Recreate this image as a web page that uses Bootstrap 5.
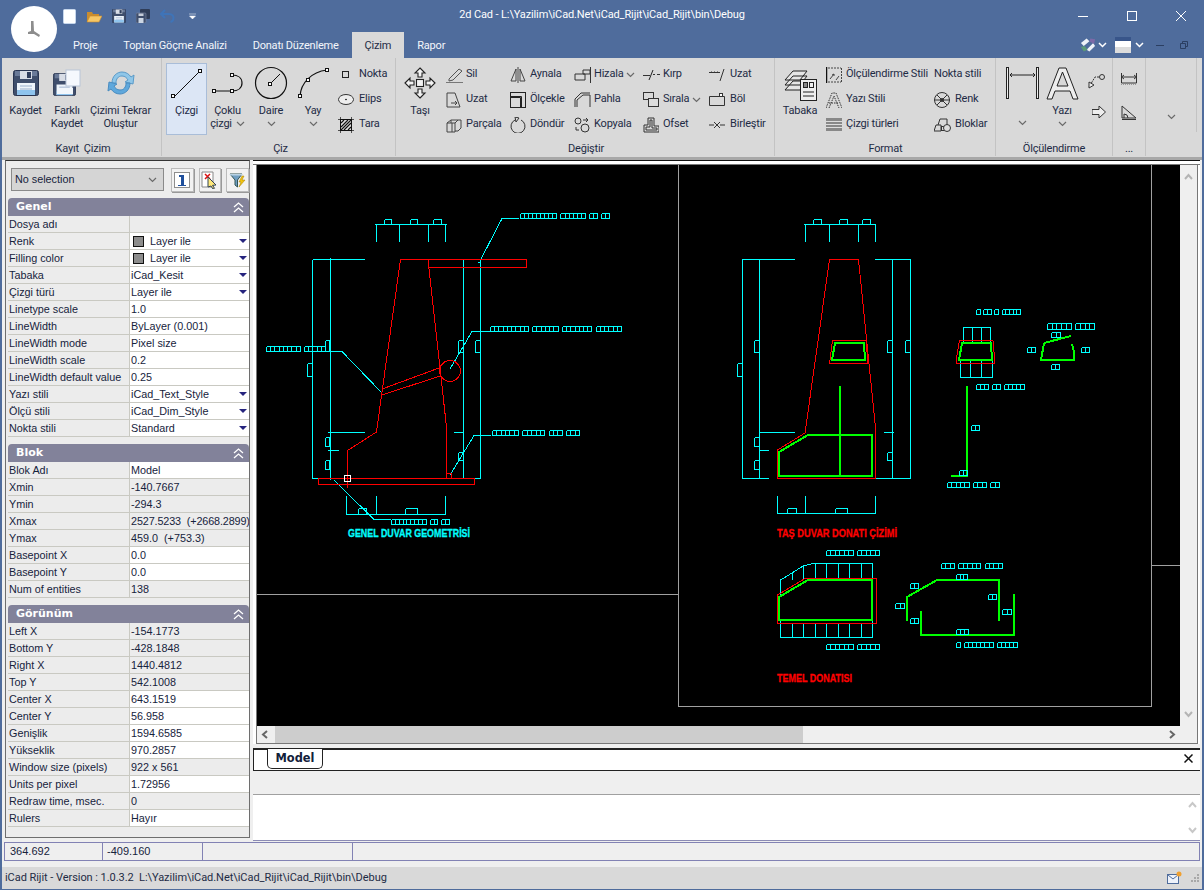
<!DOCTYPE html>
<html lang="tr">
<head>
  <meta charset="UTF-8" />
  <meta name="viewport" content="width=device-width, initial-scale=1" />
  <title>2d Cad</title>
  <link href="https://cdn.jsdelivr.net/npm/bootstrap@5.3.0/dist/css/bootstrap.min.css" rel="stylesheet" />
  <style>
    html, body { margin: 0; height: 100%; overflow: hidden; }
    body { font-family: Roboto, sans-serif; font-size: 11px; letter-spacing: -.2px; color: #1e2b45; background: #efefef; }
    svg { display: block; flex: none; }
    .app-shell { width: 1204px; height: 890px; position: relative; }

    /* title bar */
    .title-bar { height: 32px; background: #4f6c9c; color: #fff; display: grid; grid-template-columns: 1fr auto 1fr; align-items: center; }
    .title-txt { padding-bottom: 2px; letter-spacing: -.13px; }
    .qat { padding-left: 63px; gap: 10px; }
    .win-btns { gap: 39px; padding-right: 18px; }
    .logo-ball { position: absolute; left: 11px; top: 6px; width: 46px; height: 46px; border-radius: 50%; background: #fff; display: flex; align-items: center; justify-content: center; z-index: 2; }
    .tab-bar { height: 26px; background: #4f6c9c; padding-left: 60px; }
    .rtab { padding: 6px 13px 0; color: #f3f6fb; white-space: nowrap; }
    .rtab-on { background: #d9d9d9; color: #1e2b45; }
    .tab-right { padding-right: 16px; }
    .ms-12 { margin-left: 12px; }

    /* ribbon */
    .rb-strip { height: 102px; background: #d9d9d9; border-bottom: 3px solid #a8a8a8; }
    .rb-group { height: 98px; border-right: 1px solid #c3c3c3; flex: none; }
    .rb-body { height: 84px; padding-top: 4px; }
    .rb-cap { text-align: center; line-height: 14px; }
    .gw1 { width: 162px; padding-left: 5px; }
    .gw2 { width: 234px; padding-left: 4px; }
    .gw3 { width: 379px; padding-left: 2px; }
    .gw4 { width: 221px; padding-left: 1px; }
    .gw5 { width: 117px; }
    .gw6 { width: 33px; }
    .gw7 { width: 51px; border-right: 0; }
    .bigbtn { display: flex; flex-direction: column; align-items: center; text-align: center; line-height: 13px; flex: none; height: 72px; }
    .big-ic { height: 42px; width: 100%; display: flex; align-items: center; justify-content: center; }
    .big-sel { background: #dce6f5; border: 1px solid #a9bdd8; margin-top: 1px; }
    .big-sel .big-ic { height: 40px; }
    .bw41 { width: 41px; } .bw42 { width: 42px; } .bw65 { width: 65px; } .bw44 { width: 44px; } .bw48 { width: 48px; }
    .smcol { flex: none; }
    .smrow { height: 25px; display: flex; align-items: center; white-space: nowrap; }
    .sm-ic { width: 20px; flex: none; }
    .sm-ic21 { width: 21px; flex: none; }
    .cw64 { width: 64px; } .cw69 { width: 69px; } .cw66 { width: 66px; } .cw60 { width: 60px; } .cw108 { width: 108px; } .cw62 { width: 62px; }
    .ms-4px { margin-left: 4px; } .ms-2px { margin-left: 2px; }
    .dimcol { width: 42px; margin-left: 5px; } .yazicol { width: 38px; }
    .chev-slot { height: 13px; display: flex; align-items: center; justify-content: center; }
    .chev-low { margin-top: 12px; }
    .mini-col { gap: 17px; padding: 11px 0 0 7px; width: 30px; }
    .tiny-col { gap: 20px; padding: 11px 0 0 8px; }
    .end-col { width: 100%; padding-top: 56px; border-right: 1px solid #c3c3c3; height: 74px; }

    /* property panel */
    .work-row { height: 681px; }
    .prop-side { width: 245px; margin-left: 5px; background: #ececec; border: 1px solid #6e6e6e; border-top: 1px solid #333; height: 678px; flex: none; font-family: "Liberation Sans", sans-serif; font-size: 10.8px; letter-spacing: 0; color: #16233c; padding: 7px 0 0 2px; }
    .prop-tools { height: 30px; padding-left: 3px; gap: 5px; }
    .sel-box { width: 155px; height: 23px; background: #d5d5d5; border: 1px solid #8a8a8a; padding: 0 6px 0 3px; margin-right: 2px; }
    .tool-btn { width: 23px; height: 24px; background: #f2f2f2; border: 1px solid #bbb; box-shadow: 1px 1px 0 #999; display: flex; align-items: center; justify-content: center; }
    .pg-head { height: 18px; background: #82829a; color: #fff; font-family: "DejaVu Sans", sans-serif; font-weight: 700; font-size: 11px; padding: 0 5px 0 8px; border-radius: 4px 4px 0 0; }
    .pg-row { height: 17px; border-bottom: 1px solid #c9c9c2; line-height: 16px; white-space: nowrap; }
    .pg-k { width: 122px; padding-left: 1px; border-right: 1px solid #c9c9c2; flex: none; overflow: hidden; }
    .pg-v { flex: 1 1 auto; padding-left: 1px; overflow: hidden; min-width: 0; display: flex; align-items: center; justify-content: space-between; }
    .pg-fit { letter-spacing: -.12px; }
    .pg-w { background: #fff; }
    .pg-gap { height: 7px; }
    .tri-dn { width: 0; height: 0; border: 4px solid transparent; border-top: 4px solid #26247e; border-bottom: 0; margin-right: 2px; flex: none; }
    .swatch { display: inline-block; width: 11px; height: 11px; background: #8c8c8c; border: 1px solid #111; margin: 0 6px 0 2px; vertical-align: -2px; }

    /* right side */
    .right-side { width: 947px; margin-left: 3px; flex: none; }
    .top-strip { height: 5px; background: #fff; border-top: 1px solid #111; border-bottom: 1px solid #777; }
    .view-frame { background: #fff; padding-left: 3px; }
    .view-inner { border-left: 1px solid #777; border-right: 1px solid #777; border-bottom: 1px solid #777; width: 942px; background: #efefef; }
    .cad-view { background: #000; }
    .vbar { width: 17px; background: #efefef; height: 561px; padding: 8px 0; }
    .hbar { height: 17px; width: 923px; background: #efefef; padding: 0 4px; }
    .h-thumb { position: absolute; left: 7px; width: 528px; top: 0; height: 17px; background: #cdcdcd; }
    .hbar-track { position: relative; flex: 1 1 auto; height: 17px; }
    .tab-gap { height: 4px; background: #efefef; }
    .model-strip { height: 23px; background: #fff; border-top: 2px solid #222; border-bottom: 1px solid #222; border-left: 1px solid #222; padding-left: 13px; padding-right: 7px; }
    .model-tab { width: 56px; height: 20px; background: #fff; border: 1px solid #222; border-top: 0; border-radius: 0 0 5px 5px; font-family: "DejaVu Sans", sans-serif; font-weight: 700; font-size: 11.4px; letter-spacing: 0; text-align: center; line-height: 18px; margin-top: -1px; color: #12203a; }
    .out-gap { height: 24px; background: #efefef; border-bottom: 1px solid #a0a0a0; }
    .out-box { height: 46px; background: #fff; padding: 6px 0; border-bottom: 1px solid #8c8cb4; }
    .out-bar { width: 16px; }

    /* status */
    .coord-row { height: 19px; margin: 1px 4px 0 4px; border: 1px solid #8282b4; background: #efefef; font-family: "Liberation Sans", sans-serif; font-size: 11px; letter-spacing: 0; color: #16233c; line-height: 17px; }
    .cc1 { width: 98px; padding-left: 5px; border-right: 1px solid #8282b4; }
    .cc2 { width: 100px; padding-left: 4px; border-right: 1px solid #8282b4; }
    .cc3 { width: 150px; border-right: 1px solid #8282b4; }
    .foot-bar { position: absolute; left: 0; right: 0; bottom: 0; height: 25px; background: #d9d9d9; border-top: 2px solid #efefef; border-bottom: 1px solid #4f6c9c; padding: 0 4px 0 5px; letter-spacing: -.05px; }
    .side-l { position: absolute; top: 58px; bottom: 0; left: 0; width: 2px; background: #4f6c9c; z-index: 3; }
    .side-r { position: absolute; top: 58px; bottom: 0; right: 0; width: 2px; background: #4f6c9c; z-index: 3; }
  </style>
</head>
<body>
<svg width="0" height="0" class="position-absolute">
  <symbol id="chev" viewBox="0 0 9 6"><path d="M1 1l3.5 3.5L8 1" fill="none" stroke="#6a6a6a" stroke-width="1.2"/></symbol>
  <symbol id="chevw" viewBox="0 0 9 6"><path d="M1 1l3.5 3.5L8 1" fill="none" stroke="#fff" stroke-width="1.5"/></symbol>
  <symbol id="floppy" viewBox="0 0 26 26">
    <rect x=".5" y=".5" width="25" height="25" rx="2" fill="#3f4e6c" stroke="#2a3652"/>
    <rect x="2" y="1" width="22" height="5" fill="#6a7a98"/>
    <rect x="7" y="1" width="12" height="8" fill="#d8dde6"/><rect x="14" y="2" width="4" height="6" fill="#2f3d5c"/>
    <rect x="4" y="13" width="18" height="12" fill="#eef4fb"/><rect x="4" y="20" width="18" height="5" fill="#8fc4ee"/>
    <path d="M7 16h12M7 19h12" stroke="#9ab0cc"/>
  </symbol>
</svg>

<div class="app-shell">
  <div class="side-l"></div><div class="side-r"></div>

  <div class="logo-ball">
    <svg width="14" height="17" viewBox="0 0 14 17"><path d="M4 0h2.500l.5 10 6 4-1 2-5-3H1v-2l3-1z" fill="#8d8d8d"/></svg>
  </div>

  <div class="title-bar">
    <div class="qat d-flex align-items-center">
      <svg width="13" height="15"><rect x=".5" y=".5" width="12" height="14" rx="1" fill="#fff" stroke="#c6d6ec"/></svg>
      <svg width="16" height="13" viewBox="0 0 16 13"><path d="M1 12V2h5l1 2h6v8z" fill="#c98c2e"/><path d="M1 12l3-6h12l-3 6z" fill="#f6c766" stroke="#c98c2e" stroke-width=".6"/></svg>
      <svg width="14" height="14"><use href="#floppy"/></svg>
      <svg width="14" height="14" viewBox="0 0 14 14"><rect x="4" y="0" width="10" height="10" rx="1" fill="#2f3d58"/><rect x="0" y="4" width="10" height="10" rx="1" fill="#3f4e6c" stroke="#7c8aa5" stroke-width=".6"/><rect x="2.500" y="9" width="5" height="5" fill="#ccd6e3"/><rect x="2.500" y="4.500" width="5" height="2.500" fill="#c5ccd8"/></svg>
      <svg width="15" height="14" viewBox="0 0 15 14"><path d="M5 1L1 5l4 4M1.500 5H9c3 0 4.500 2 4.500 4s-1 3.500-3 4" fill="none" stroke="#3f74b8" stroke-width="2"/></svg>
      <svg width="8" height="6" viewBox="0 0 8 6" class="ms-1"><path d="M0 1h7M.5 3h6L3.500 6z" fill="#fff" stroke="#fff" stroke-width=".5"/></svg>
    </div>
    <div class="title-txt">2d Cad - L:\Yazilim\iCad.Net\iCad_Rijit\iCad_Rijit\bin\Debug</div>
    <div class="win-btns d-flex justify-content-end align-items-center">
      <svg width="10" height="10"><path d="M0 5.500h10" stroke="#fff"/></svg>
      <svg width="10" height="10"><rect x=".5" y=".5" width="9" height="9" fill="none" stroke="#fff"/></svg>
      <svg width="10" height="10"><path d="M0 0l10 10M10 0L0 10" stroke="#fff"/></svg>
    </div>
  </div>

  <div class="tab-bar d-flex justify-content-between">
    <div class="d-flex">
      <div class="rtab">Proje</div>
      <div class="rtab">Toptan Göçme Analizi</div>
      <div class="rtab">Donatı Düzenleme</div>
      <div class="rtab rtab-on">Çizim</div>
      <div class="rtab">Rapor</div>
    </div>
    <div class="tab-right d-flex align-items-center">
      <svg width="16" height="16" viewBox="0 0 17 16"><path d="M1 6l6-5 3 3-6 5zM7 13l7-7 2 3-6 6z" fill="#eef2f8"/><path d="M11 1l5 1-1 5-5-3z" fill="#7c6aa8"/><path d="M1 10l4-1 3 4-4 2z" fill="#5b9a78"/></svg>
      <svg width="9" height="6" class="ms-2px"><use href="#chevw"/></svg>
      <svg width="16" height="16" viewBox="0 0 16 16" class="ms-2"><rect width="16" height="4" fill="#38558a"/><rect y="4" width="16" height="6" fill="#fff"/><rect y="10" width="16" height="6" fill="#dcdcdc"/></svg>
      <svg width="9" height="6" class="ms-1"><use href="#chevw"/></svg>
      <svg width="8" height="8" class="ms-12"><path d="M0 4.500h8" stroke="#2b3f62"/></svg>
      <svg width="8" height="8" class="ms-3"><path d="M2.500 2.500V.5h5v5h-2M.5 2.500h5v5h-5z" fill="none" stroke="#2b3f62"/></svg>
    </div>
  </div>

  <div class="rb-strip d-flex">
    <!-- Kayıt Çizim -->
    <div class="rb-group gw1">
      <div class="rb-body d-flex">
        <div class="bigbtn bw41"><div class="big-ic"><svg width="26" height="26"><use href="#floppy"/></svg></div>Kaydet</div>
        <div class="bigbtn bw42"><div class="big-ic"><svg width="28" height="28" viewBox="0 0 28 28"><use href="#floppy" width="23" height="23" y="4"/><rect x="13" y="1" width="14" height="16" fill="#f5f8fd" stroke="#b9c6d8"/><rect x="4" y="19" width="16" height="6" fill="#f2f7fc"/></svg></div>Farklı<br>Kaydet</div>
        <div class="bigbtn bw65"><div class="big-ic"><svg width="32" height="28" viewBox="0 0 32 28"><path d="M7 14C7 7 12 3 17 3c4 0 7 2 9 5l3-2-1 9-8-2 3-2c-1-2-3-4-6-4-4 0-6 3-6 7z" fill="#8fc6e8" stroke="#5a9ac8"/><path d="M25 14c0 7-5 11-10 11-4 0-7-2-9-5l-3 2 1-9 8 2-3 2c1 2 3 4 6 4 4 0 6-3 6-7z" fill="#5fa8dc" stroke="#4a8cc0"/></svg></div><span class="text-nowrap">Çizimi Tekrar</span>Oluştur</div>
      </div>
      <div class="rb-cap">Kayıt&nbsp; Çizim</div>
    </div>

    <!-- Çiz -->
    <div class="rb-group gw2">
      <div class="rb-body d-flex">
        <div class="bigbtn bw41 big-sel"><div class="big-ic"><svg width="33" height="33" viewBox="0 0 33 33" fill="#fff" stroke="#111"><path d="M4 29L29 4"/><rect x="1.500" y="26.500" width="3" height="3"/><rect x="28.500" y="1.500" width="3" height="3"/></svg></div>Çizgi</div>
        <div class="bigbtn bw41"><div class="big-ic"><svg width="33" height="22" viewBox="0 0 33 22" fill="none" stroke="#111"><path d="M3 19h18M21 3c6 0 10 3 10 8s-4 8-10 8" stroke-width="1.200"/><rect x="1.500" y="17.500" width="3" height="3" fill="#fff"/><rect x="19.500" y="17.500" width="3" height="3" fill="#fff"/><rect x="19.500" y="1.500" width="3" height="3" fill="#fff"/></svg></div>Çoklu<span class="d-flex align-items-center gap-1">çizgi <svg width="9" height="6"><use href="#chev"/></svg></span></div>
        <div class="bigbtn bw42 ms-2px"><div class="big-ic"><svg width="34" height="34" viewBox="0 0 34 34" fill="#fff" stroke="#111"><circle cx="17" cy="17" r="15.500" fill="none" stroke-width="1.200"/><path d="M16 18L26 8"/><rect x="14.500" y="16.500" width="3" height="3"/></svg></div>Daire<div class="chev-slot"><svg width="9" height="6"><use href="#chev"/></svg></div></div>
        <div class="bigbtn bw42"><div class="big-ic"><svg width="33" height="32" viewBox="0 0 33 32" fill="#fff" stroke="#111"><path d="M3 29C4 16 14 5 30 3" fill="none" stroke-width="1.200"/><rect x="1.500" y="27.500" width="3" height="3"/><rect x="9.500" y="11.500" width="3" height="3"/><rect x="28.500" y="1.500" width="3" height="3"/></svg></div>Yay<div class="chev-slot"><svg width="9" height="6"><use href="#chev"/></svg></div></div>
        <div class="smcol ms-4px">
          <div class="smrow"><div class="sm-ic21"><svg width="16" height="9" viewBox="0 0 16 9"><rect x="4.500" y="1.500" width="6" height="6" fill="none" stroke="#222"/></svg></div>Nokta</div>
          <div class="smrow"><div class="sm-ic21"><svg width="16" height="11" viewBox="0 0 16 11"><ellipse cx="8" cy="5.500" rx="7.500" ry="5" fill="#eee" stroke="#333"/><circle cx="8" cy="5.500" r=".8"/></svg></div>Elips</div>
          <div class="smrow"><div class="sm-ic21"><svg width="16" height="16" viewBox="0 0 16 16" fill="none" stroke="#111"><rect x="2.500" y="2.500" width="11" height="11" fill="#ddd"/><path d="M3 6l3-3M3 10l7-7M3 13l10-10M6 13l7-7M10 13l3-3" stroke-width="1.100"/><path d="M0 2.500h16M0 13.500h16M2.500 0v16M13.500 0v16" stroke-width=".7"/></svg></div>Tara</div>
        </div>
      </div>
      <div class="rb-cap">Çiz</div>
    </div>

    <!-- Değiştir -->
    <div class="rb-group gw3">
      <div class="rb-body d-flex">
        <div class="bigbtn bw44"><div class="big-ic"><svg width="32" height="32" viewBox="0 0 32 32" fill="#f3f3f3" stroke="#222" stroke-width="1.100"><rect x="12.500" y="12.500" width="7" height="7"/><path d="M16 1l5 5h-3v4h-4V6h-3zM16 31l5-5h-3v-4h-4v4h-3zM1 16l5-5v3h4v4H6v3zM31 16l-5-5v3h-4v4h4v3z"/></svg></div>Taşı</div>
        <div class="smcol cw64 ms-4px">
          <div class="smrow"><div class="sm-ic"><svg width="17" height="16" viewBox="0 0 17 16" fill="none" stroke="#555"><path d="M3 12L13 2l3 2L7 13l-4 1z"/><path d="M0 15.500h17" stroke="#777"/></svg></div>Sil</div>
          <div class="smrow"><div class="sm-ic"><svg width="17" height="16" viewBox="0 0 17 16" fill="none" stroke="#444"><path d="M1 1h8l5 14H1zM5 11h6M9 9l2 2-2 2"/></svg></div>Uzat</div>
          <div class="smrow"><div class="sm-ic"><svg width="17" height="16" viewBox="0 0 17 16" fill="none" stroke="#444"><path d="M1 6h8v9H1zM9 6l3-3M5 3h10v8l-3 3H9M5 3l-4 3M5 3v3"/><path d="M6 6v9" /></svg></div>Parçala</div>
        </div>
        <div class="smcol cw64">
          <div class="smrow"><div class="sm-ic"><svg width="16" height="16" viewBox="0 0 16 16" fill="none" stroke="#444"><path d="M8 0v16M6 2L1 14h5zM10 2l5 12h-5z"/></svg></div>Aynala</div>
          <div class="smrow"><div class="sm-ic"><svg width="16" height="16" viewBox="0 0 16 16" fill="none" stroke="#222"><rect x=".5" y=".5" width="15" height="15"/><path d="M.5 5.500h10v10M.5 4.500h11v11"/></svg></div>Ölçekle</div>
          <div class="smrow"><div class="sm-ic"><svg width="16" height="16" viewBox="0 0 16 16" fill="none" stroke="#333"><path d="M5 3a7 7 0 1 0 6 0M5 0l1 5 3-4z"/></svg></div>Döndür</div>
        </div>
        <div class="smcol cw69">
          <div class="smrow"><div class="sm-ic"><svg width="17" height="16" viewBox="0 0 17 16" fill="none" stroke="#333"><path d="M16.500 0v16M1 7h10v6H1zM9 3h7v4H9z"/></svg></div>Hizala&nbsp;<svg width="9" height="6"><use href="#chev"/></svg></div>
          <div class="smrow"><div class="sm-ic"><svg width="17" height="16" viewBox="0 0 17 16" fill="none" stroke="#333"><path d="M1 15V7l6-6h9M3 15V8l6-5h7v12"/></svg></div>Pahla</div>
          <div class="smrow"><div class="sm-ic"><svg width="17" height="16" viewBox="0 0 17 16" fill="none" stroke="#333"><circle cx="4" cy="4" r="3"/><circle cx="11" cy="11" r="4"/><path d="M9 3h5l-2-2M14 3l-2 2M2 10v3h3"/></svg></div>Kopyala</div>
        </div>
        <div class="smcol cw66">
          <div class="smrow"><div class="sm-ic"><svg width="17" height="10" viewBox="0 0 17 10" fill="none" stroke="#333"><path d="M0 5.500h7M10 4.500h2M14 4.500h3"/><path d="M6 10l4-10" stroke="#222"/></svg></div>Kırp</div>
          <div class="smrow"><div class="sm-ic"><svg width="16" height="15" viewBox="0 0 16 15" fill="none" stroke="#333"><rect x=".5" y=".5" width="10" height="7"/><rect x="5.500" y="6.500" width="10" height="8" fill="#ddd"/></svg></div>Sırala&nbsp;<svg width="9" height="6"><use href="#chev"/></svg></div>
          <div class="smrow"><div class="sm-ic"><svg width="16" height="16" viewBox="0 0 16 16" fill="none" stroke="#333"><path d="M1 15V8h4V1h6v8h5v6zM3 13V10h4V3h2v8h5v2z"/></svg></div>Ofset</div>
        </div>
        <div class="smcol cw60">
          <div class="smrow"><div class="sm-ic21"><svg width="16" height="12" viewBox="0 0 16 12" fill="none" stroke="#333"><path d="M0 3.500h11M11 12L15 0" /><path d="M2 2.500h1M5 2.500h1M8 2.500h1" stroke="#888"/></svg></div>Uzat</div>
          <div class="smrow"><div class="sm-ic21"><svg width="16" height="13" viewBox="0 0 16 13" fill="none" stroke="#333"><path d="M.5 3.500h10M14 3.500h1.500v9H.5v-9"/><rect x="10.500" y=".5" width="3" height="3" fill="#fff"/></svg></div>Böl</div>
          <div class="smrow"><div class="sm-ic21"><svg width="16" height="8" viewBox="0 0 16 8" fill="none" stroke="#333"><path d="M0 4h5M11 4h5M5 1l6 6M11 1L5 7"/></svg></div>Birleştir</div>
        </div>
      </div>
      <div class="rb-cap">Değiştir</div>
    </div>

    <!-- Format -->
    <div class="rb-group gw4">
      <div class="rb-body d-flex">
        <div class="bigbtn bw48"><div class="big-ic"><svg width="33" height="35" viewBox="0 0 33 35" fill="#e6e6e6" stroke="#222"><path d="M1 14L9 5h14l-7 9zM1 19l8-9h14l-7 9zM1 24l8-9h14l-7 9z"/><rect x="16.500" y="13.500" width="16" height="21" fill="#eee"/><rect x="19.500" y="16.500" width="4" height="5" fill="#888"/><rect x="25.500" y="16.500" width="4" height="5" fill="none"/><path d="M19 26h11M19 30h11" /></svg></div>Tabaka</div>
        <div class="smcol cw108 ms-2px">
          <div class="smrow"><div class="sm-ic"><svg width="16" height="16" viewBox="0 0 16 16" fill="none" stroke="#444"><path d="M.5 0v16" stroke="#111" stroke-width="1.500"/><path d="M15.500 1v14M2 1h13M2 15h13" stroke-dasharray="2 1"/><path d="M4 12l4-5M10 13l3-4M6 8l2-1v2" /></svg></div>Ölçülendirme Stili</div>
          <div class="smrow"><div class="sm-ic"><svg width="16" height="16" viewBox="0 0 16 16" fill="none" stroke="#333" stroke-dasharray="1.500 1"><path d="M0 16L6 1h4l6 15M3 11h10M3 16L8 4l5 12"/></svg></div>Yazı Stili</div>
          <div class="smrow"><div class="sm-ic"><svg width="16" height="13" viewBox="0 0 16 13"><rect width="16" height="13" fill="#888"/><path d="M0 3.500h16M0 6.500h16M0 9.500h16" stroke="#ddd"/></svg></div>Çizgi türleri</div>
        </div>
        <div class="smcol cw62">
          <div class="smrow">Nokta stili</div>
          <div class="smrow"><div class="sm-ic21"><svg width="16" height="16" viewBox="0 0 16 16" fill="none" stroke="#333"><circle cx="8" cy="8" r="7.500"/><circle cx="8" cy="8" r="1.500"/><path d="M3 3l10 10M13 3L3 13M0 8h16"/></svg></div>Renk</div>
          <div class="smrow"><div class="sm-ic21"><svg width="17" height="15" viewBox="0 0 17 15" fill="none" stroke="#333"><path d="M0 14l2-6h5v6zM4 8l2-6h7v6"/><rect x="7.500" y="9.500" width="4" height="4" /><circle cx="13" cy="11" r="3.500" fill="#ddd"/></svg></div>Bloklar</div>
        </div>
      </div>
      <div class="rb-cap">Format</div>
    </div>

    <!-- Ölçülendirme -->
    <div class="rb-group gw5">
      <div class="rb-body d-flex">
        <div class="bigbtn dimcol"><div class="big-ic"><svg width="33" height="32" viewBox="0 0 33 32" fill="#eee" stroke="#222"><rect x=".5" y=".5" width="2" height="31"/><rect x="30.500" y=".5" width="2" height="31"/><path d="M4 8h25M6 6L4 8l2 2M27 6l2 2-2 2" fill="none"/></svg></div><div class="chev-slot chev-low"><svg width="9" height="6"><use href="#chev"/></svg></div></div>
        <div class="bigbtn yazicol"><div class="big-ic"><svg width="33" height="33" viewBox="0 0 33 33" fill="#eee" stroke="#222"><path d="M1 32L13 1h7l12 31h-5l-3-8H9l-3 8zM11 19h11L16.500 5z"/></svg></div>Yazı<div class="chev-slot"><svg width="9" height="6"><use href="#chev"/></svg></div></div>
        <div class="smcol mini-col d-flex flex-column">
          <svg width="18" height="16" viewBox="0 0 18 16" fill="none" stroke="#333"><circle cx="14" cy="4" r="2.500"/><path d="M11 4H7L1 14" stroke-dasharray="2 1"/><path d="M1 15V9l5 3z" fill="#eee"/></svg>
          <svg width="14" height="12" viewBox="0 0 14 12" class="ms-1" fill="#eee" stroke="#333"><path d="M0 3.500h7V0l6.500 6L7 12V8.500H0z"/></svg>
        </div>
      </div>
      <div class="rb-cap">Ölçülendirme</div>
    </div>

    <div class="rb-group gw6">
      <div class="rb-body"><div class="tiny-col d-flex flex-column">
        <svg width="16" height="12" viewBox="0 0 16 12" fill="none" stroke="#333"><path d="M.5 0v10h15V0M.5 4h15M3 2L.5 4 3 6M13 2l2.500 2L13 6"/><path d="M0 11.500h16" stroke="#999" stroke-dasharray="1 1"/></svg>
        <svg width="16" height="16" viewBox="0 0 16 16" fill="none" stroke="#333"><path d="M1 1v12h14zM1 14.500h14M3 13v-4a4 4 0 0 1 4 4"/></svg>
      </div></div>
      <div class="rb-cap">...</div>
    </div>

    <div class="rb-group gw7">
      <div class="end-col d-flex justify-content-center"><svg width="9" height="6"><use href="#chev"/></svg></div>
    </div>
  </div>

  <div class="work-row d-flex">
    <div class="prop-side">
      <div class="prop-tools d-flex">
        <div class="sel-box d-flex align-items-center justify-content-between">No selection <svg width="9" height="6"><use href="#chev"/></svg></div>
        <div class="tool-btn"><svg width="16" height="16" viewBox="0 0 16 16"><rect x=".5" y=".5" width="15" height="15" fill="#fff" stroke="#222" stroke-dasharray="1 1"/><path d="M5 3h5v10h2v1H4v-1h3V5H5z" fill="#1f4f9c"/></svg></div>
        <div class="tool-btn"><svg width="17" height="18" viewBox="0 0 17 18"><path d="M1 1h11v15H1z" fill="#fff" stroke="#888"/><path d="M4 3l5 5M9 3L4 8" stroke="#d11" stroke-width="1.500"/><path d="M7 6l8 8-3.500.3 2 3-1.500.7-2-3L7 16z" fill="#ffe87a" stroke="#345"/></svg></div>
        <div class="tool-btn"><svg width="17" height="17" viewBox="0 0 17 17"><path d="M1 2h12L8.500 8v7L6 13V8z" fill="#6f9ec2" stroke="#355"/><path d="M1 2h12v1.500H1z" fill="#b8d2e4"/><path d="M13 4l-3 6h2l-2 5 6-7h-3l2-4z" fill="#f1c40f" stroke="#a67c00" stroke-width=".5"/></svg></div>
      </div>

      <div class="pg-head d-flex align-items-center justify-content-between">Genel <svg width="11" height="11" viewBox="0 0 11 11" fill="none" stroke="#fff" stroke-width="1.300"><path d="M1 5l4.500-4L10 5M1 10l4.500-4L10 10"/></svg></div>
      <div class="pg-row d-flex"><div class="pg-k">Dosya adı</div><div class="pg-v"></div></div>
      <div class="pg-row d-flex"><div class="pg-k">Renk</div><div class="pg-v pg-w"><span><i class="swatch"></i>Layer ile</span><i class="tri-dn"></i></div></div>
      <div class="pg-row d-flex"><div class="pg-k">Filling color</div><div class="pg-v pg-w"><span><i class="swatch"></i>Layer ile</span><i class="tri-dn"></i></div></div>
      <div class="pg-row d-flex"><div class="pg-k">Tabaka</div><div class="pg-v pg-w"><span>iCad_Kesit</span><i class="tri-dn"></i></div></div>
      <div class="pg-row d-flex"><div class="pg-k">Çizgi türü</div><div class="pg-v pg-w"><span>Layer ile</span><i class="tri-dn"></i></div></div>
      <div class="pg-row d-flex"><div class="pg-k">Linetype scale</div><div class="pg-v pg-w">1.0</div></div>
      <div class="pg-row d-flex"><div class="pg-k">LineWidth</div><div class="pg-v pg-w">ByLayer (0.001)</div></div>
      <div class="pg-row d-flex"><div class="pg-k">LineWidth mode</div><div class="pg-v pg-w">Pixel size</div></div>
      <div class="pg-row d-flex"><div class="pg-k">LineWidth scale</div><div class="pg-v pg-w">0.2</div></div>
      <div class="pg-row d-flex"><div class="pg-k">LineWidth default value</div><div class="pg-v pg-w">0.25</div></div>
      <div class="pg-row d-flex"><div class="pg-k">Yazı stili</div><div class="pg-v pg-w"><span>iCad_Text_Style</span><i class="tri-dn"></i></div></div>
      <div class="pg-row d-flex"><div class="pg-k">Ölçü stili</div><div class="pg-v pg-w"><span>iCad_Dim_Style</span><i class="tri-dn"></i></div></div>
      <div class="pg-row d-flex"><div class="pg-k">Nokta stili</div><div class="pg-v pg-w"><span>Standard</span><i class="tri-dn"></i></div></div>
      <div class="pg-gap"></div>

      <div class="pg-head d-flex align-items-center justify-content-between">Blok <svg width="11" height="11" viewBox="0 0 11 11" fill="none" stroke="#fff" stroke-width="1.300"><path d="M1 5l4.500-4L10 5M1 10l4.500-4L10 10"/></svg></div>
      <div class="pg-row d-flex"><div class="pg-k">Blok Adı</div><div class="pg-v pg-w">Model</div></div>
      <div class="pg-row d-flex"><div class="pg-k">Xmin</div><div class="pg-v">-140.7667</div></div>
      <div class="pg-row d-flex"><div class="pg-k">Ymin</div><div class="pg-v">-294.3</div></div>
      <div class="pg-row d-flex"><div class="pg-k">Xmax</div><div class="pg-v pg-fit">2527.5233&nbsp; (+2668.2899)</div></div>
      <div class="pg-row d-flex"><div class="pg-k">Ymax</div><div class="pg-v">459.0&nbsp; (+753.3)</div></div>
      <div class="pg-row d-flex"><div class="pg-k">Basepoint X</div><div class="pg-v pg-w">0.0</div></div>
      <div class="pg-row d-flex"><div class="pg-k">Basepoint Y</div><div class="pg-v pg-w">0.0</div></div>
      <div class="pg-row d-flex"><div class="pg-k">Num of entities</div><div class="pg-v">138</div></div>
      <div class="pg-gap"></div>

      <div class="pg-head d-flex align-items-center justify-content-between">Görünüm <svg width="11" height="11" viewBox="0 0 11 11" fill="none" stroke="#fff" stroke-width="1.300"><path d="M1 5l4.500-4L10 5M1 10l4.500-4L10 10"/></svg></div>
      <div class="pg-row d-flex"><div class="pg-k">Left X</div><div class="pg-v">-154.1773</div></div>
      <div class="pg-row d-flex"><div class="pg-k">Bottom Y</div><div class="pg-v">-428.1848</div></div>
      <div class="pg-row d-flex"><div class="pg-k">Right X</div><div class="pg-v">1440.4812</div></div>
      <div class="pg-row d-flex"><div class="pg-k">Top Y</div><div class="pg-v">542.1008</div></div>
      <div class="pg-row d-flex"><div class="pg-k">Center X</div><div class="pg-v pg-w">643.1519</div></div>
      <div class="pg-row d-flex"><div class="pg-k">Center Y</div><div class="pg-v pg-w">56.958</div></div>
      <div class="pg-row d-flex"><div class="pg-k">Genişlik</div><div class="pg-v pg-w">1594.6585</div></div>
      <div class="pg-row d-flex"><div class="pg-k">Yükseklik</div><div class="pg-v pg-w">970.2857</div></div>
      <div class="pg-row d-flex"><div class="pg-k">Window size (pixels)</div><div class="pg-v">922 x 561</div></div>
      <div class="pg-row d-flex"><div class="pg-k">Units per pixel</div><div class="pg-v pg-w">1.72956</div></div>
      <div class="pg-row d-flex"><div class="pg-k">Redraw time, msec.</div><div class="pg-v">0</div></div>
      <div class="pg-row d-flex"><div class="pg-k">Rulers</div><div class="pg-v pg-w">Hayır</div></div>
    </div>

    <div class="right-side">
      <div class="top-strip"></div>
      <div class="view-frame">
        <div class="view-inner">
          <div class="d-flex">
            <svg id="cadView" class="cad-view" width="923" height="561" viewBox="257 165 923 561" shape-rendering="crispEdges" fill="none">
              <g stroke="#a0a0a0">
                <path d="M678.500 165V706.500H1151.500V165M257 594.500H678M1152 565.500H1180"/>
              </g>
              <g stroke="#00ffff">
                <!-- genel duvar -->
                <path d="M375 224.500H447M376.500 224V242M399.500 224V242M428.500 224V242M445.500 224V242"/>
                <path d="M312.500 259.500V478.500H318M312.500 259.500H365M330.500 258V480M463.500 259V478M480.500 259V478.500H475"/>
                <path d="M328 432.500H365M454 432.500H463M328 450.500H339"/>
                <path d="M519 218.500H502L481 259M478 262.500H481M490 331.500H472L450 369M491 435.500H474L450 475"/>
                <path d="M312 351.500H342L381 392M334 480L374 519.500H391"/>
                <path d="M346.500 496V514M376.500 496V514M445.500 496V514M346 514.500H446"/>
                <!-- tas duvar -->
                <path d="M804 224.500H876M805.500 224V242M829.500 224V242M858.500 224V242M875.500 224V242"/>
                <path d="M742.500 259V478.500H769M742 259.500H795M759.500 259V478M875 259.500H910.500V478.500H875M892.500 259V478"/>
                <path d="M759 432.500H795M884 432.500H894M759 450.500H769"/>
                <path d="M777.500 496V513.500M805.500 496V513.500M875.500 496V513.500M777 513.500H876"/>
                <!-- kesit -->
                <path d="M963.500 327.500H990.500V343M963.500 327V343M972.500 327V343M981.500 327V343"/>
                <path d="M960.500 360V377.500H992.500V360M970.500 360V377M981.500 360V377"/>
                <!-- temel -->
                <path d="M780.500 597V580L792 573L803 566L813 563.500H872.500V580M792.500 573V580M803.500 566V580M815.500 563V580M826.500 563V580M838.500 563V580M849.500 563V580M861.500 563V580"/>
                <path d="M780.500 620V637.500H872.500V620M792.500 623V637M803.500 623V637M815.500 623V637M826.500 623V637M838.500 623V637M849.500 623V637M861.500 623V637"/>
              </g>
              <g stroke="#ff0000">
                <path d="M400.500 259.500L382 392L376.500 432L347.500 450.500V488"/>
                <path d="M428 259.500L446.500 427V478"/>
                <path d="M400 259.500H526.500V267.500H429"/>
                <path d="M382 389L439 368M382 395L440 376"/>
                <circle cx="450" cy="371" r="10.500"/>
                <rect x="318.500" y="478.500" width="156" height="6"/>
                <path d="M446 473H451V478H446"/>
                <path d="M829.500 259.500L805 433L777.500 450V478.500H875.500V428L858.500 259.500H829.500"/>
                <path d="M832.500 340.500H866L868 363.500H829.500L830.500 356z"/>
                <path d="M959.500 340.500H993L995 363.500H956.500V358z"/>
                <path d="M777.500 595L805 578.500H876.500V623.500H777.500z"/>
              </g>
              <g stroke="#00ff00" stroke-width="2">
                <path d="M779 452L808 435H872V476H779zM840 386V476"/>
                <path d="M835 343H864L865 360H832z"/>
                <path d="M962 343H991L992 360H959z"/>
                <path d="M1044 343L1071 336M1044 343L1041 360H1074V352L1072 344"/>
                <path d="M967 386V476H951"/>
                <path d="M779 597L808 580H872V620H779z"/>
                <path d="M907 621V597L937 580H999V621"/>
                <path d="M921 611V635H1014V594"/>
              </g>
              <path d="M344.500 475.500h6v6h-6z" stroke="#fff"/>
              <g id="tofu" stroke="#00ffff"></g>
              <g font-family="Liberation Sans, sans-serif" font-weight="700" font-size="11" letter-spacing="0" shape-rendering="auto">
                <text x="348" y="537" fill="#00ffff" stroke="#00ffff" stroke-width=".3" textLength="122" lengthAdjust="spacingAndGlyphs">GENEL DUVAR GEOMETRİSİ</text>
                <text x="777" y="537" fill="#ff0000" stroke="#ff0000" stroke-width=".3" textLength="120" lengthAdjust="spacingAndGlyphs">TAŞ DUVAR DONATI ÇİZİMİ</text>
                <text x="777" y="682" fill="#ff0000" stroke="#ff0000" stroke-width=".3" textLength="75" lengthAdjust="spacingAndGlyphs">TEMEL DONATISI</text>
              </g>
            </svg>
            <div class="vbar d-flex flex-column justify-content-between align-items-center">
              <svg width="9" height="7" viewBox="0 0 9 7"><path d="M1 6l3.500-4L8 6" fill="none" stroke="#b4b4b4" stroke-width="2"/></svg>
              <svg width="9" height="7" viewBox="0 0 9 7"><path d="M1 1l3.500 4L8 1" fill="none" stroke="#b4b4b4" stroke-width="2"/></svg>
            </div>
          </div>
          <div class="hbar d-flex align-items-center justify-content-between">
            <svg width="7" height="9" viewBox="0 0 7 9"><path d="M6 1L2 4.500 6 8" fill="none" stroke="#666" stroke-width="2"/></svg>
            <div class="hbar-track"><div class="h-thumb"></div></div>
            <svg width="7" height="9" viewBox="0 0 7 9"><path d="M1 1l4 3.500L1 8" fill="none" stroke="#666" stroke-width="2"/></svg>
          </div>
        </div>
      </div>
      <div class="tab-gap"></div>
      <div class="model-strip d-flex justify-content-between">
        <div class="model-tab">Model</div>
        <svg width="9" height="9" class="mt-1"><path d="M.5.500l8 8M8.500.500l-8 8" stroke="#111" stroke-width="1.500"/></svg>
      </div>
      <div class="out-gap"></div>
      <div class="out-box d-flex justify-content-end">
        <div class="out-bar d-flex flex-column justify-content-between align-items-center">
          <svg width="9" height="7" viewBox="0 0 9 7"><path d="M1 6l3.500-4L8 6" fill="none" stroke="#c8c8c8" stroke-width="2"/></svg>
          <svg width="9" height="7" viewBox="0 0 9 7"><path d="M1 1l3.500 4L8 1" fill="none" stroke="#c8c8c8" stroke-width="2"/></svg>
        </div>
      </div>
    </div>
  </div>

  <div class="coord-row d-flex">
    <div class="cc1">364.692</div>
    <div class="cc2">-409.160</div>
    <div class="cc3"></div>
  </div>

  <div class="foot-bar d-flex align-items-center justify-content-between">
    <span>iCad Rijit - Version : 1.0.3.2&nbsp; L:\Yazilim\iCad.Net\iCad_Rijit\iCad_Rijit\bin\Debug</span>
    <span class="d-flex align-items-center gap-2">
      <svg width="15" height="14" viewBox="0 0 15 14"><rect x=".5" y="3.500" width="11" height="9" fill="#eef2fa" stroke="#4f6c9c"/><path d="M1 4l5 4 5-4" fill="none" stroke="#4f6c9c"/><circle cx="12" cy="3" r="2.500" fill="#f0a030"/></svg>
      <svg width="10" height="10" viewBox="0 0 10 10" fill="#a8a8a8"><rect x="7" y="1" width="2" height="2"/><rect x="4" y="4" width="2" height="2"/><rect x="7" y="4" width="2" height="2"/><rect x="1" y="7" width="2" height="2"/><rect x="4" y="7" width="2" height="2"/><rect x="7" y="7" width="2" height="2"/></svg>
    </span>
  </div>
</div>

<script src="https://cdn.jsdelivr.net/npm/bootstrap@5.3.0/dist/js/bootstrap.bundle.min.js"></script>
<script>
  // placeholder boxes the CAD font draws for missing glyphs: x1, x2, y1, y2, run lengths
  const boxes = [
    [520,609,213,218,[9,6,2,2]], [490,621,326,331,[9,6,7,6]], [266,325,346,351,[8,5]],
    [492,579,430,435,[6,5,3,3]], [391,449,519,524,[9,2,2]],
    [976,1020,309,314,[1,2,1,5]], [976,1024,384,389,[3,2,5]], [1047,1094,323,329,[5,4]],
    [1051,1060,332,337,[2]], [1027,1035,347,352,[2]], [1081,1089,347,352,[2]], [1051,1059,364,369,[2]],
    [971,979,425,430,[2]], [959,967,470,475,[2]], [947,999,482,487,[5,3,2]],
    [826,879,550,555,[6,5]], [826,879,644,649,[6,5]], [941,1002,563,568,[3,5,4]],
    [956,967,574,579,[3]], [910,918,583,588,[2]], [895,904,603,608,[2]], [910,918,618,623,[2]],
    [988,996,594,599,[2]], [1002,1011,609,614,[2]], [956,968,629,634,[3]], [956,1017,642,647,[1,7,5]],
    // rotated dimension values
    [384,391,219,224,[1]], [410,417,219,224,[1]], [433,441,219,224,[1]],
    [813,821,219,224,[1]], [839,847,219,224,[1]], [862,870,219,224,[1]],
    [325,329,340,351,[1]], [307,312,363,376,[1]], [458,463,340,352,[1]], [475,480,340,352,[1]],
    [325,329,437,446,[1]], [325,329,460,469,[1]], [458,463,452,460,[1]],
    [754,759,340,352,[1]], [737,742,363,376,[1]], [887,892,340,352,[1]], [905,910,340,352,[1]],
    [754,759,437,446,[1]], [754,759,460,469,[1]], [887,892,452,460,[1]],
    [358,366,508,514,[1]], [405,417,508,514,[1]], [787,796,508,513,[1]], [835,847,508,513,[1]]
  ];
  let d = '';
  boxes.forEach(([x1, x2, y1, y2, runs]) => {
    const units = runs.reduce((a, b) => a + b, 0) + runs.length - 1;
    const w = (x2 - x1) / units;
    let x = x1;
    runs.forEach(n => {
      for (let i = 0; i < n; i++) {
        d += `M${Math.round(x + i * w) + .5} ${y1 + .5}V${y2 + .5}`;
      }
      d += `M${Math.round(x) + .5} ${y1 + .5}H${Math.round(x + n * w) + .5}V${y2 + .5}H${Math.round(x) + .5}`;
      x += (n + 1) * w;
    });
  });
  const p = document.createElementNS('http://www.w3.org/2000/svg', 'path');
  p.setAttribute('d', d);
  document.getElementById('tofu').appendChild(p);
</script>
</body>
</html>
